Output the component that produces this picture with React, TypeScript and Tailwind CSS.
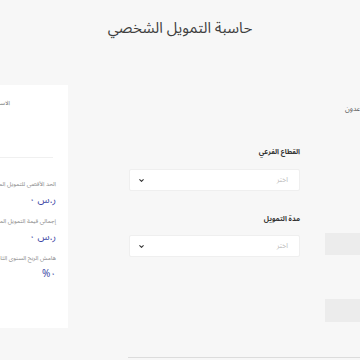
import { ChevronDown } from 'lucide-react';

function Select({ placeholder }: { placeholder: string }) {
  return (
    <div className="flex h-[22px] items-center justify-between rounded-[2px] border border-[#efefef] bg-white pr-[11px] pl-[8px]">
      <span className="text-[7px] leading-[10px] text-[#b8b8b8]">{placeholder}</span>
      <ChevronDown className="h-[7px] w-[7px] text-[#333]" strokeWidth={3.5} />
    </div>
  );
}

function Stat({ label, value }: { label: string; value: string }) {
  return (
    <div className="pr-[12px]">
      <div className="whitespace-nowrap text-[6px] leading-[10px] text-[#8a8a8a]">{label}</div>
      <div className="mt-[4px] whitespace-nowrap text-[10px] leading-[14px] text-[#3f4aa6]">{value}</div>
    </div>
  );
}

export default function App() {
  return (
    <div
      dir="rtl"
      className="h-[360px] w-[360px] overflow-hidden bg-[#f7f7f7] font-['Noto_Sans_Arabic','DejaVu_Sans',sans-serif]"
    >
      <h1 className="pt-[18px] text-center text-[15px] leading-[20px] text-[#3f3f3f]">حاسبة التمويل الشخصي</h1>

      <div className="-mr-[40px] mt-[47px] flex items-start gap-[60px]">
        {/* form */}
        <div className="w-[272px] shrink-0">
          <div className="flex gap-[25px]">
            <div className="w-[75px] shrink-0 pt-[19px]">
              <div className="whitespace-nowrap pl-[20px] text-left text-[7px] leading-[10px] text-[#555]">المتقاعدون</div>
              <div className="mt-[119px] h-[22px] bg-[#ececec]" />
              <div className="mt-[44px] h-[23px] bg-[#ececec]" />
            </div>
            <div className="w-[171px] shrink-0 pt-[62px]">
              <label className="block text-[7px] font-bold leading-[10px] text-[#333]">القطاع الفرعي</label>
              <div className="mt-[12px]">
                <Select placeholder="اختر" />
              </div>
              <label className="mt-[23px] block text-[7px] font-bold leading-[10px] text-[#333]">مدة التمويل</label>
              <div className="mt-[11px]">
                <Select placeholder="اختر" />
              </div>
            </div>
          </div>
          <div className="mt-[35px] h-px bg-[#dcdcdc]" />
        </div>

        {/* summary card */}
        <div className="h-[243px] w-[110px] shrink-0 bg-white pt-[13px]">
          <div className="whitespace-nowrap pr-[58px] text-[6px] leading-[10px] text-[#777]">الاسم</div>
          <div className="mr-[15px] mt-[49px] h-px bg-[#f0f0f0]" />
          <div className="mt-[21px] flex flex-col gap-[9px]">
            <Stat label="الحد الأقصى للتمويل المتاح" value="ر.س ٠" />
            <Stat label="إجمالي قيمة التمويل المستحق" value="ر.س ٠" />
            <Stat label="هامش الربح السنوي الثابت" value="٠%" />
          </div>
        </div>
      </div>
    </div>
  );
}
